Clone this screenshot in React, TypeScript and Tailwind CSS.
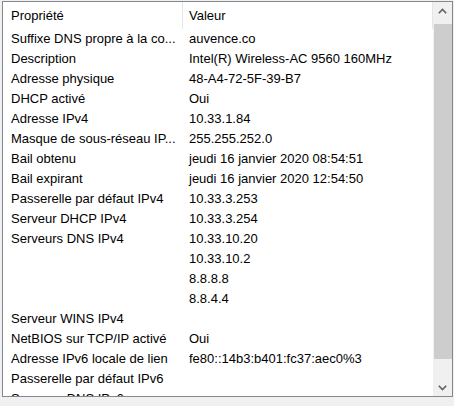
import React from "react";

const rows: [string, string][] = [
  ["Suffixe DNS propre à la co...", "auvence.co"],
  ["Description", "Intel(R) Wireless-AC 9560 160MHz"],
  ["Adresse physique", "48-A4-72-5F-39-B7"],
  ["DHCP activé", "Oui"],
  ["Adresse IPv4", "10.33.1.84"],
  ["Masque de sous-réseau IP...", "255.255.252.0"],
  ["Bail obtenu", "jeudi 16 janvier 2020 08:54:51"],
  ["Bail expirant", "jeudi 16 janvier 2020 12:54:50"],
  ["Passerelle par défaut IPv4", "10.33.3.253"],
  ["Serveur DHCP IPv4", "10.33.3.254"],
  ["Serveurs DNS IPv4", "10.33.10.20"],
  ["", "10.33.10.2"],
  ["", "8.8.8.8"],
  ["", "8.8.4.4"],
  ["Serveur WINS IPv4", ""],
  ["NetBIOS sur TCP/IP activé", "Oui"],
  ["Adresse IPv6 locale de lien", "fe80::14b3:b401:fc37:aec0%3"],
  ["Passerelle par défaut IPv6", ""],
  ["Serveurs DNS IPv6", ""],
];

const Chevron = ({ up }: { up?: boolean }) => (
  <svg width="9" height="6" viewBox="0 0 9 6" className={up ? "" : "rotate-180"}>
    <path d="M0.8 5.2 L4.5 1.5 L8.2 5.2" fill="none" stroke="#606060" strokeWidth="1.6" />
  </svg>
);

const App = () => {
  return (
    <div
      className="w-[454px] h-[406px] bg-[#f0f0f0] pt-[1px] pl-[2px] text-[13px] text-black"
      style={{ fontFamily: '"Liberation Sans", Arial, sans-serif' }}
    >
      <div className="w-[451px] h-[396px] border border-[#828790] bg-white flex">
        <div className="flex-1 overflow-hidden">
          <div className="h-[27px] flex items-center">
            <div className="w-[180px] h-full flex items-center pl-[8px] border-r border-[#e5e5e5]">
              Propriété
            </div>
            <div className="flex-1 h-full flex items-center pl-[6px] border-r border-[#e5e5e5]">
              Valeur
            </div>
          </div>
          {rows.map(([k, v], i) => (
            <div key={i} className="h-[20px] flex items-center whitespace-nowrap">
              <div className="w-[180px] pl-[8px] overflow-hidden">{k}</div>
              <div className="pl-[6px]">{v}</div>
            </div>
          ))}
        </div>
        <div className="w-[19px] bg-[#f0f0f0] flex flex-col">
          <div className="h-[17px] flex items-center justify-center">
            <Chevron up />
          </div>
          <div className="flex-1 flex flex-col pt-[5px] pb-[20px] pl-[1px]">
            <div className="flex-1 bg-[#cdcdcd]" />
          </div>
          <div className="h-[17px] flex items-center justify-center">
            <Chevron />
          </div>
        </div>
      </div>
    </div>
  );
};

export default App;
